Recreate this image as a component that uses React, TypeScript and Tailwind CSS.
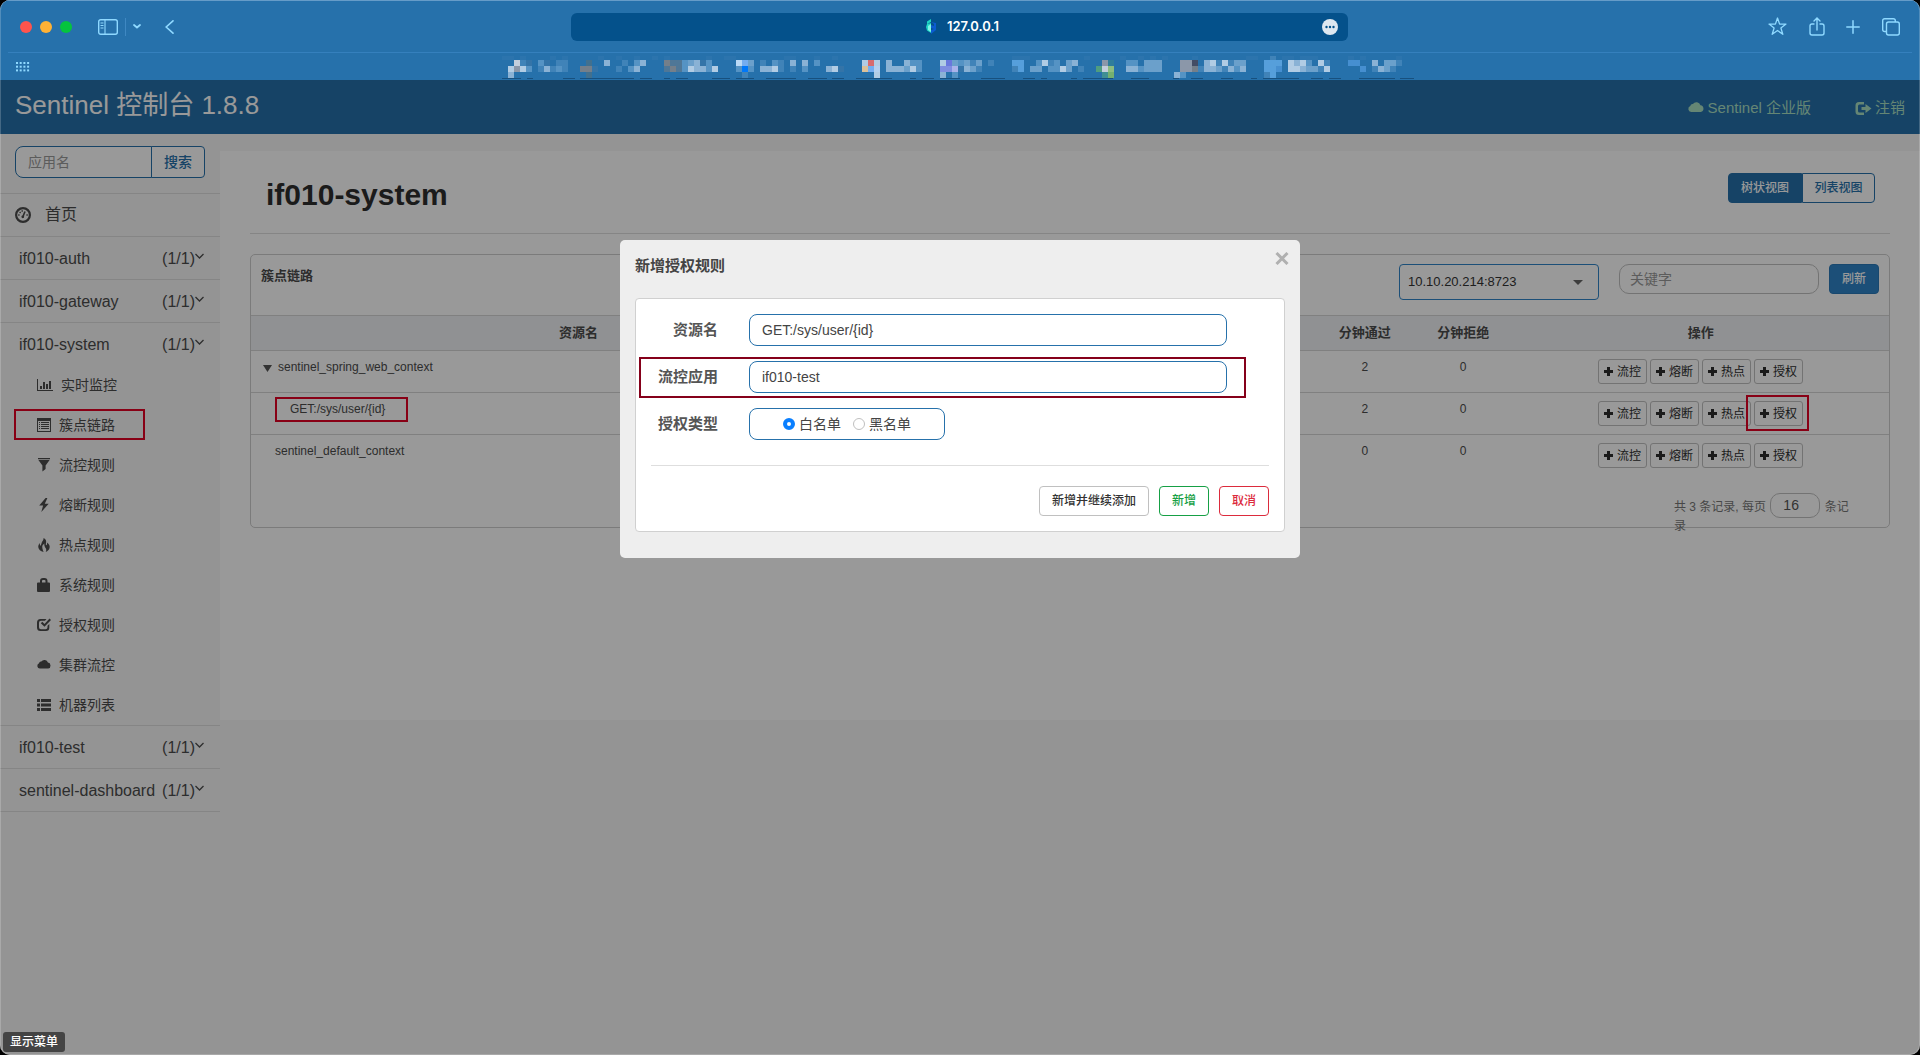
import { useState } from "react";
import clsx from "clsx";

const ICON_PATHS: Record<string, string> = {
  chart: "M0 1h1v11h15v1H0zM3 8h2v3H3zM6 4h2v7H6zM9 6h2v5H9zM12 3h2v8h-2z",
  list: "M0 0h14v14H0zM1 3v10h12V3zM2 4h1v1H2zM4 4h8v1H4zM2 6h1v1H2zM4 6h8v1H4zM2 8h1v1H2zM4 8h8v1H4zM2 10h1v1H2zM4 10h8v1H4z",
  filter: "M1 0h12v1.2H1zM1.4 2h11.2L8.6 7.4V11L5.4 13.6V7.4z",
  bolt: "M8.6 0 2.2 7.6h3.9L4.3 14l7.4-8.2H7.8L10.4 0z",
  fire: "M6.6 0c2.4 1.4 3 3.2 2.4 5.2-.3 1-.2 1.700.4 2 .7-.5.8-1.500.6-2.6 2.200 1.500 3 3.300 2.600 5.200-.4 2-1.800 3.400-3.900 4.200.9-1.700.7-3-.5-4.400C7.600 8.200 7 7 7.400 5.500 5.700 6.600 5 8 5.300 9.600c.1 1.300.600 2.600 1.300 4.400C3.400 13.200 1.600 11.500 1.300 9.300 1.100 7.700 1.700 6.400 2.900 5c-.1 1.300 0 2.200.5 2.800.7-.9.9-1.700 1.200-2.800C5 3.300 6.700 2.200 6.600 0z",
  lock: "M0 5.500Q0 4.500 1 4.500h2V3Q3 0 6 0h1.500q3 0 3 3v1.500h1.500q1 0 1 1V13q0 1-1 1H1q-1 0-1-1zM5 4.500h3.500V3Q8.500 2 7.500 2H6Q5 2 5 3z",
  check: "M3.500 1h6L8 2.800H4Q2 2.800 2 4.800v4.400q0 2 2 2h4.500q2 0 2-2V7.800l1.800-1.800v3.700Q12.300 13 9 13H3.500Q0 13 0 9.500v-5Q0 1 3.500 1zM12.500.5 14 2 7.500 8.800 3.800 5.300 5.300 3.800 7.500 5.900z",
  cloud: "M2.800 10.500A2.700 2.700 0 0 1 2 5.300 2.100 2.100 0 0 1 4.300 3.600 3.700 3.700 0 0 1 10.900 4.600 3 3 0 0 1 11.200 10.500z",
  machines: "M0 1h3v3H0zM4 1h10v3H4zM0 5.500h3v3H0zM4 5.500h10v3H4zM0 10h3v3H0zM4 10h10v3H4z",
};

const MENU_ITEMS = [
  { icon: "chart", label: "实时监控" },
  { icon: "list", label: "簇点链路", marked: true },
  { icon: "filter", label: "流控规则" },
  { icon: "bolt", label: "熔断规则" },
  { icon: "fire", label: "热点规则" },
  { icon: "lock", label: "系统规则" },
  { icon: "check", label: "授权规则" },
  { icon: "cloud", label: "集群流控" },
  { icon: "machines", label: "机器列表" },
];

const APPS = ["if010-auth", "if010-gateway", "if010-system", "if010-test", "sentinel-dashboard"];

const COLUMNS = [
  { label: "资源名", width: "w-[40%]" },
  { label: "通过QPS", width: "" },
  { label: "拒绝QPS", width: "" },
  { label: "并发数", width: "" },
  { label: "平均RT", width: "" },
  { label: "分钟通过", width: "w-[6%]" },
  { label: "分钟拒绝", width: "w-[6%]" },
  { label: "操作", width: "w-[23%]" },
];

const ROWS = [
  { name: "sentinel_spring_web_context", stats: [0, 0, 0, 0, 2, 0], root: true },
  { name: "GET:/sys/user/{id}", stats: [0, 0, 0, 0, 2, 0], marked: true },
  { name: "sentinel_default_context", stats: [0, 0, 0, 0, 0, 0] },
];

const ACTIONS = ["流控", "熔断", "热点", "授权"];

// Bookmark bar tiles: [row, first column, one palette letter per tile]
const TILES: [number, number, string][] = [
  [0, -1, "ii"], [0, 2, "i"], [0, 7, "i"], [0, 9, "i"], [0, 15, "i"], [0, 18, "i"], [0, 21, "i"], [0, 24, "i"],
  [0, 26, "i"], [0, 33, "i"], [0, 36, "ii"], [0, 46, "ii"], [0, 51, "i"], [0, 54, "i"], [0, 84, "iii"], [0, 96, "i"],
  [0, 102, "i"], [0, 105, "i"], [0, 107, "i"], [0, 109, "i"], [0, 114, "i"], [0, 123, "ii"], [0, 127, "g"],
  [0, 129, "ii"], [0, 132, "iii"], [0, 140, "i"], [0, 142, "i"], [0, 148, "i"],
  [1, 1, "agh"], [1, 5, "fh.gg"], [1, 13, "l"], [1, 16, "d"], [1, 19, "g.fd"], [1, 26, "kmmfedhf"],
  [1, 38, "noe"], [1, 42, "g.fg.d.d.f"], [1, 59, "cRc.d..dff"], [1, 72, "cVefege.g"], [1, 84, "SS"],
  [1, 88, "fcgf.ed"], [1, 99, "bt"], [1, 103, "ff.eee"], [1, 112, "bbK.dcgcgee"], [1, 126, "SSS.cdcf.cg"],
  [1, 140, "ss..d.eeg"],
  [2, 0, "cbcf.gdgfg"], [2, 12, "kkh"], [2, 18, "g.fd"], [2, 26, "mkmfcddfc"], [2, 38, "fBf.ddcg.g.f"],
  [2, 53, "dch"], [2, 59, "YoC.dddecf"], [2, 72, "PPQhdeg"], [2, 84, "gS.ee.ffce.g"], [2, 98, "GaL"],
  [2, 103, "ddfeee"], [2, 112, "bbkgddegdfd"], [2, 126, "SSs.ccdeegc"], [2, 142, "s.gdeg"],
  [3, 0, "d"], [3, 13, "l"], [3, 39, "g"], [3, 61, "c"], [3, 72, "d.f"], [3, 99, "TU"], [3, 111, "df"], [3, 126, "gS"],
];

const TILE_COLORS: Record<string, string> = {
  a: "#c3cedc", b: "#8b97a9", c: "#b1cce4", d: "#8ab2d5", e: "#6ba0cb", f: "#5593c4", g: "#4083b8",
  h: "#3474a8", i: "#2c74ad", k: "#747f8a", l: "#41708f", m: "#4f7797", n: "#b9d9f6", o: "#74adf0",
  s: "#468fd0", t: "#2f7e9b", B: "#0078f8", C: "#b3d0ef", G: "#4f9d80", K: "#434d65", L: "#8cbd80",
  P: "#7f8ee0", Q: "#aab3ea", R: "#d76b6e", S: "#569fdb", T: "#3f8f93", U: "#74b070", V: "#6a78dd",
  Y: "#dcc199",
};

const DASHES = [
  [502, 19], [527, 6], [563, 12], [580, 54], [640, 12], [664, 6], [676, 12], [712, 18], [736, 18], [766, 30],
  [808, 19], [832, 12], [856, 36], [910, 6], [922, 12], [940, 20], [981, 24], [1023, 12], [1041, 6],
  [1071, 6], [1083, 30], [1131, 18], [1173, 6], [1191, 12], [1221, 12], [1251, 6], [1263, 30], [1287, 12],
  [1311, 12], [1329, 12], [1359, 36], [1400, 14],
];

function Glyph({ name, className }: { name: string; className?: string }) {
  const wide = name === "chart";
  return (
    <svg
      viewBox={wide ? "0 0 16 14" : "0 0 14 14"}
      className={clsx("shrink-0", className ?? (wide ? "h-[14px] w-4" : "h-[14px] w-[14px]"))}
      fill="currentColor"
      fillRule="evenodd"
    >
      <path d={ICON_PATHS[name]} />
    </svg>
  );
}

function BookmarkTiles() {
  return (
    <svg className="mx-auto h-[26px] w-[920px]" viewBox="500 53 920 26" shapeRendering="crispEdges">
      {TILES.map(([row, start, tiles]) =>
        tiles.split("").map((t, i) =>
          t === "." ? null : (
            <rect
              key={`${row}-${start}-${i}`}
              x={508 + (start + i) * 6}
              y={row === 0 ? 55 : 53 + row * 6}
              width={6}
              height={row === 0 ? 4 : 6}
              fill={TILE_COLORS[t]}
            />
          )
        )
      )}
      {DASHES.map(([x, w]) => (
        <rect key={x} x={x} y={77} width={w} height={1} fill="#17507e" />
      ))}
    </svg>
  );
}

function BrowserChrome() {
  return (
    <div className="h-20 border-t border-[#669cc8] bg-[#2671ab]">
      <div className="flex h-[51px] items-center justify-between px-5 text-[#8fd9ff]">
        <div className="flex w-[551px] items-center">
          <div className="flex gap-2">
            <span className="h-3 w-3 rounded-full bg-[#ff544d]" />
            <span className="h-3 w-3 rounded-full bg-[#ffb235]" />
            <span className="h-3 w-3 rounded-full bg-[#05c43e]" />
          </div>
          <button aria-label="Sidebar" className="ml-[26px]">
            <svg width="20" height="16" viewBox="0 0 20 16" fill="none" stroke="currentColor" strokeWidth="1.400">
              <rect x="0.700" y="0.700" width="18.600" height="14.600" rx="2" />
              <path d="M7 1v14M2.500 4h3M2.500 6.500h3M2.500 9h3" strokeWidth="1.100" />
            </svg>
          </button>
          <span className="ml-[7px] h-[18px] w-px bg-[#3f88c2]" />
          <button aria-label="Tab groups" className="ml-[7px]">
            <svg width="8" height="5" viewBox="0 0 8 5" fill="none" stroke="currentColor" strokeWidth="1.800" strokeLinecap="round">
              <path d="M1 1l3 2.500L7 1" />
            </svg>
          </button>
          <button aria-label="Back" className="ml-6">
            <svg width="9" height="14" viewBox="0 0 9 14" fill="none" stroke="currentColor" strokeWidth="1.600" strokeLinecap="round">
              <path d="M8 .8 1.200 7 8 13.200" />
            </svg>
          </button>
        </div>
        <div className="flex h-7 flex-1 items-center rounded-md bg-[#04518b] pr-2.5 text-white">
          <div className="flex flex-1 items-center justify-center gap-2.5 pl-8">
            <svg width="11" height="15" viewBox="0 0 11 15">
              <path d="M5 0 1 2.500V5l4-2zM1 5l4-1v10L1 11.500 0 8z" fill="#1fd5c4" />
              <path d="M2 7l3-2v8L2 11z" fill="#7ff5e6" />
              <path d="M5 3l5 1v7l-5 4v-4l3-1-3-1V6l3 1V5z" fill="#0b5bd0" />
            </svg>
            <span className="font-[Inter,sans-serif] text-[13px] font-semibold">127.0.0.1</span>
          </div>
          <button aria-label="Page menu">
            <svg width="16" height="16" viewBox="0 0 16 16">
              <circle cx="8" cy="8" r="8" fill="#dde7f0" />
              <g fill="#04518b">
                <circle cx="4.500" cy="8" r="1.200" />
                <circle cx="8" cy="8" r="1.200" />
                <circle cx="11.500" cy="8" r="1.200" />
              </g>
            </svg>
          </button>
        </div>
        <div className="flex w-[552px] items-center justify-end">
          <button aria-label="Favourite">
            <svg width="19" height="19" viewBox="0 0 19 19" fill="none" stroke="currentColor" strokeWidth="1.300" strokeLinejoin="round">
              <path d="M9.500 1l2.100 6.100H18l-5.100 3.900 1.900 6.300-5.300-3.800-5.300 3.800 1.900-6.300L1 7.100h6.400z" />
            </svg>
          </button>
          <button aria-label="Share" className="ml-[22px]">
            <svg width="16" height="20" viewBox="0 0 16 20" fill="none" stroke="currentColor" strokeWidth="1.400" strokeLinecap="round">
              <path d="M5 7H3Q1 7 1 9v7q0 2 2 2h10q2 0 2-2V9q0-2-2-2h-2M8 13V1.500M5 4l3-3 3 3" />
            </svg>
          </button>
          <button aria-label="New tab" className="ml-[21px]">
            <svg width="14" height="14" viewBox="0 0 14 14" stroke="currentColor" strokeWidth="1.500" strokeLinecap="round">
              <path d="M7 .8v12.400M.8 7h12.400" />
            </svg>
          </button>
          <button aria-label="Tabs" className="ml-[22px]">
            <svg width="18" height="18" viewBox="0 0 18 18" fill="none" stroke="currentColor" strokeWidth="1.400">
              <rect x="4.500" y="4" width="12.800" height="13" rx="2" />
              <path d="M4 13.500H2.700q-2 0-2-2V2.700q0-2 2-2h8.600q2 0 2 2V4" />
            </svg>
          </button>
        </div>
      </div>
      <div className="mx-2 flex h-7 items-center border-t border-[#3580bd] text-[#8fd9ff]">
        <svg className="ml-2" width="14" height="10" viewBox="0 0 14 10" fill="currentColor">
          {[0, 1, 2].map((r) =>
            [0, 1, 2, 3].map((c) => <rect key={`${r}${c}`} x={c * 3.7} y={r * 3.7} width="2" height="2" />)
          )}
        </svg>
        <div className="flex-1 pr-[22px]">
          <BookmarkTiles />
        </div>
      </div>
    </div>
  );
}

function Sidebar() {
  return (
    <aside className="w-[220px] shrink-0">
      <form className="flex h-[59px] px-[15px] pt-3 text-sm">
        <input
          aria-label="应用名"
          placeholder="应用名"
          className="h-8 w-[137px] rounded-l-lg border border-[#2671ab] bg-white px-3 placeholder:text-[#999]"
        />
        <button type="button" className="-ml-px h-8 flex-1 rounded-r border border-[#2671ab] bg-white font-medium text-[#2671ab]">
          搜索
        </button>
      </form>
      <nav className="border-b border-[#dedede]">
        <a href="#home" className="flex h-[43px] items-center border-t border-[#dedede] px-[15px]">
          <svg className="mr-3.5 h-4 w-4" viewBox="0 0 16 16" fill="none" stroke="currentColor">
            <circle cx="8" cy="8" r="6.900" strokeWidth="2.200" />
            <path d="M7.800 10 10 4.500" strokeWidth="1.600" />
            <circle cx="7.800" cy="9.800" r="1.400" fill="currentColor" stroke="none" />
            <path d="M3.200 8h1.400M4.600 5l1 .9M7.200 3.300v1.400M11.400 8h1.400" strokeWidth="1.400" />
          </svg>
          首页
        </a>
        {APPS.map((app) => (
          <div key={app}>
            <a href={`#${app}`} className="flex h-[43px] items-center border-t border-[#dedede] pt-0.5 pr-4 pl-[19px]">
              <span className="flex-1 whitespace-nowrap">{app}</span>
              <span>(1/1)</span>
              <svg className="mb-1.5 h-2 w-[9px]" viewBox="0 0 9 8" fill="none" stroke="currentColor" strokeWidth="1.300">
                <path d="M.5 2l4 4 4-4" />
              </svg>
            </a>
            {app === "if010-system" && (
              <ul className="text-sm">
                {MENU_ITEMS.map((item) => (
                  <li key={item.label} className="relative">
                    <a href={`#${item.label}`} className="flex h-10 items-center gap-2 pl-[37px]">
                      <Glyph name={item.icon} />
                      {item.label}
                    </a>
                    {item.marked && (
                      <span className="absolute top-1 left-3.5 h-[31px] w-[131px] border-2 border-[#e30023]" />
                    )}
                  </li>
                ))}
              </ul>
            )}
          </div>
        ))}
      </nav>
    </aside>
  );
}

function ResourceTable() {
  return (
    <table className="w-full table-fixed text-xs">
      <thead className="bg-[#f0f2f5] text-[13px]">
        <tr className="h-[35px] border-y border-[#d6d6d6]">
          {COLUMNS.map((c) => (
            <th key={c.label} className={clsx("font-bold whitespace-nowrap", c.width)}>
              {c.label}
            </th>
          ))}
        </tr>
      </thead>
      <tbody>
        {ROWS.map((row) => (
          <tr key={row.name} className="h-[42px] border-t border-[#d6d6d6] align-top">
            <td className="relative pt-2">
              {row.root ? (
                <span className="flex items-center pl-3">
                  <svg className="mt-0.5 mr-1.5 h-[7px] w-[9px]" viewBox="0 0 9 7" fill="#555">
                    <path d="M0 0h9L4.500 7z" />
                  </svg>
                  {row.name}
                </span>
              ) : (
                <span className={clsx("block", row.marked ? "pl-[39px]" : "pl-6")}>{row.name}</span>
              )}
              {row.marked && (
                <span className="absolute top-1 left-6 h-[25px] w-[133px] border-2 border-[#e30023]" />
              )}
            </td>
            {row.stats.map((n, i) => (
              <td key={i} className="pt-2 text-center">
                {n}
              </td>
            ))}
            <td className="pt-2">
              <div className="flex justify-center gap-[3px] text-[#2e2e2e]">
                {ACTIONS.map((action, i) => (
                  <div key={action} className="relative">
                    <button className="flex h-[25px] w-[49px] items-center justify-center gap-1 rounded-[3px] border border-[#c0c0c0] whitespace-nowrap">
                      <svg className="h-[9px] w-[9px]" viewBox="0 0 9 9" fill="currentColor">
                        <path d="M3 0h3v3h3v3H6v3H3V6H0V3h3z" />
                      </svg>
                      {action}
                    </button>
                    {row.marked && i === 3 && (
                      <span className="absolute -top-1.5 -left-2 h-9 w-[63px] border-2 border-[#e30023]" />
                    )}
                  </div>
                ))}
              </div>
            </td>
          </tr>
        ))}
      </tbody>
    </table>
  );
}

function Content() {
  return (
    <section className="mt-[17px] min-w-0 flex-1 self-start bg-white px-[30px] pb-48">
      <div className="flex items-start justify-between border-b border-[#dedede] pt-[22px] pr-[15px] pb-4 pl-4">
        <h2 className="text-3xl leading-[44px] font-bold text-[#2e2e2e]">if010-system</h2>
        <div className="flex text-xs font-medium">
          <button className="h-[30px] w-[74px] rounded-l border border-[#2671ab] bg-[#2671ab] text-white">
            树状视图
          </button>
          <button className="h-[30px] w-[73px] rounded-r border border-[#2671ab] text-[#2671ab]">
            列表视图
          </button>
        </div>
      </div>

      <div className="mt-5 rounded-[5px] border border-[#cdcdcd]">
        <div className="flex h-[60px] items-start pt-[9px] pr-2.5 pl-2.5">
          <h3 className="flex-1 text-[13px] leading-6 font-bold">簇点链路</h3>
          <div className="relative mr-5 w-[200px]">
            <select
              aria-label="机器"
              className="h-9 w-full appearance-none rounded border border-[#2f84c9] px-2 text-[13px] text-[#333]"
            >
              <option>10.10.20.214:8723</option>
            </select>
            <svg className="pointer-events-none absolute top-4 right-4 h-[5px] w-2.5" viewBox="0 0 10 5" fill="#666">
              <path d="M0 0h10L5 5z" />
            </svg>
          </div>
          <input
            aria-label="关键字"
            placeholder="关键字"
            className="mr-2.5 h-[30px] w-[200px] rounded-[10px] border border-[#c0c0c0] px-2.5 text-sm placeholder:text-[#999]"
          />
          <button className="h-[30px] w-[50px] rounded border border-[#2b78b8] bg-[#2f84c9] text-xs font-medium text-white">
            刷新
          </button>
        </div>

        <ResourceTable />

        <div className="flex h-[50px] justify-end pt-4 pr-[35px] text-xs leading-[17px] text-[#777]">
          <label className="w-[180px]">
            共 3 条记录, 每页{" "}
            <input
              defaultValue="16"
              className="mx-px h-[25px] w-[50px] rounded-[10px] border border-[#c0c0c0] px-3 text-sm text-[#555]"
            />{" "}
            条记录
          </label>
        </div>
      </div>
    </section>
  );
}

function AuthorityDialog() {
  const [kind, setKind] = useState("white");

  return (
    <div className="absolute inset-0 bg-black/40 pt-40">
      <div role="dialog" aria-label="新增授权规则" className="relative mx-auto w-[680px] rounded-[5px] bg-[#eee] px-[15px] pt-3.5 pb-[26px]">
        <button aria-label="关闭" className="absolute top-3 right-[11px] text-[#b0b0b0]">
          <svg width="14" height="13" viewBox="0 0 14 13" stroke="currentColor" strokeWidth="3">
            <path d="M1.500 1l11 11M12.500 1l-11 11" />
          </svg>
        </button>
        <h4 className="text-[15px] leading-6 font-bold text-[#444]">新增授权规则</h4>

        <form className="mt-5 rounded border border-[#d0d0d0] bg-white p-[15px] text-sm text-[#444]">
          <div className="flex items-center">
            <label htmlFor="resource" className="w-[67px] text-right text-[15px] font-bold text-[#555]">
              资源名
            </label>
            <input
              id="resource"
              defaultValue="GET:/sys/user/{id}"
              className="ml-[31px] h-8 w-[478px] rounded-lg border border-[#2671ab] px-3"
            />
          </div>

          <div className="relative mt-[15px] flex items-center">
            <label htmlFor="limitApp" className="w-[67px] text-right text-[15px] font-bold text-[#555]">
              流控应用
            </label>
            <input
              id="limitApp"
              defaultValue="if010-test"
              className="ml-[31px] h-8 w-[478px] rounded-lg border border-[#2671ab] px-3"
            />
            <span className="pointer-events-none absolute -top-1 -left-3 h-[41px] w-[607px] border-2 border-[#85001a]" />
          </div>

          <div className="mt-[15px] flex items-center" role="radiogroup" aria-label="授权类型">
            <span className="w-[67px] text-right text-[15px] font-bold text-[#555]">授权类型</span>
            <div className="ml-[31px] flex h-8 w-[196px] items-center justify-center gap-3 rounded-lg border border-[#2671ab]">
              {[
                ["white", "白名单"],
                ["black", "黑名单"],
              ].map(([value, label]) => (
                <label key={value} className="flex items-center gap-1">
                  <input
                    type="radio"
                    name="kind"
                    checked={kind === value}
                    onChange={() => setKind(value)}
                    className="h-3 w-3 appearance-none rounded-full border border-[#c0c0c0] bg-white checked:border-4 checked:border-[#0a7fff]"
                  />
                  {label}
                </label>
              ))}
            </div>
          </div>

          <div className="mt-[25px] flex justify-end gap-2.5 border-t border-[#dedede] pt-5 text-xs font-medium">
            <button type="button" className="h-[30px] w-[110px] rounded border border-[#c0c0c0] text-[#333]">
              新增并继续添加
            </button>
            <button type="button" className="h-[30px] w-[50px] rounded border border-[#16a045] text-[#16a045]">
              新增
            </button>
            <button type="button" className="h-[30px] w-[50px] rounded border border-[#dc2b3d] text-[#dc2b3d]">
              取消
            </button>
          </div>
        </form>
      </div>
    </div>
  );
}

export default function App() {
  return (
    <div className="min-h-screen bg-black font-['Liberation_Sans','Noto_Sans_CJK_SC',sans-serif] text-[#4c4c4c]">
      <div className="relative flex min-h-screen flex-col overflow-hidden rounded-[10px] bg-[#f7f7f7]">
        <BrowserChrome />
        <div className="relative flex flex-1 flex-col">
          <header className="flex h-[54px] items-center justify-between bg-[#2671ab] px-[15px]">
            <h1 className="pb-1 text-[26px] text-white">Sentinel 控制台 1.8.8</h1>
            <div className="flex gap-11 pt-0.5 text-[15px] text-[#a8dfc2]">
              <a href="#enterprise" className="flex items-center gap-1">
                <Glyph name="cloud" className="h-4 w-4" />
                Sentinel 企业版
              </a>
              <a href="#logout" className="flex items-center gap-[3px]">
                <svg className="h-[15px] w-[17px]" viewBox="0 0 17 15" fill="currentColor">
                  <path d="M4 1h5v2.500H4.500Q3 3.500 3 5v5q0 1.500 1.500 1.500H9V14H4q-3.500 0-3.500-3.500v-6Q.5 1 4 1z" />
                  <path d="M6.500 6h4V3L16.500 7.500l-6 4.500V9h-4z" />
                </svg>
                注销
              </a>
            </div>
          </header>
          <main className="flex flex-1">
            <Sidebar />
            <Content />
          </main>
          <AuthorityDialog />
        </div>
        <div className="absolute bottom-[3px] left-[3px] rounded-[3px] bg-[#444] px-[7px] text-xs leading-5 font-medium text-white">
          显示菜单
        </div>
        <div className="pointer-events-none absolute inset-0 rounded-[10px] border-x border-b border-white/20" />
      </div>
    </div>
  );
}
